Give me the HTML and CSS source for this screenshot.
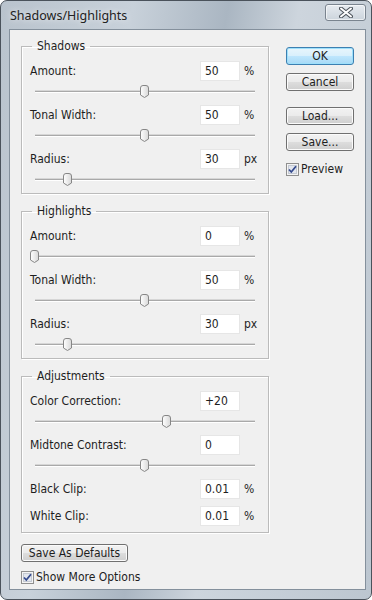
FILE: index.html
```html
<!DOCTYPE html>
<html lang="en">
<head>
    <meta charset="UTF-8">
    <title>Shadows/Highlights</title>
    <link rel="stylesheet" href="styles.css">
</head>
<body>
    <div class="window">
        <div class="titlebar">
            <span class="title">Shadows/Highlights</span>
            <span class="close">
                <svg width="14" height="11" viewBox="0 0 14 11">
                    <path d="M2 1.5 L12 9.5 M12 1.5 L2 9.5" stroke="#4d545c" stroke-width="4" stroke-linecap="round"/>
                    <path d="M2 1.5 L12 9.5 M12 1.5 L2 9.5" stroke="#fff" stroke-width="2" stroke-linecap="round"/>
                </svg>
            </span>
        </div>
        <div class="client">
            <div class="main">
                <div class="groups">
                    <!-- Shadows -->
                    <fieldset class="group">
                        <legend>Shadows</legend>
                        <div class="field">
                            <label>Amount:</label>
                            <input class="num" type="text" value="50">
                            <span class="unit">%</span>
                        </div>
                        <div class="slider"><div class="track"><span class="thumb" style="left:50%"></span></div></div>
                        <div class="field">
                            <label>Tonal Width:</label>
                            <input class="num" type="text" value="50">
                            <span class="unit">%</span>
                        </div>
                        <div class="slider"><div class="track"><span class="thumb" style="left:50%"></span></div></div>
                        <div class="field">
                            <label>Radius:</label>
                            <input class="num" type="text" value="30">
                            <span class="unit">px</span>
                        </div>
                        <div class="slider"><div class="track"><span class="thumb" style="left:15%"></span></div></div>
                    </fieldset>

                    <!-- Highlights -->
                    <fieldset class="group">
                        <legend>Highlights</legend>
                        <div class="field">
                            <label>Amount:</label>
                            <input class="num" type="text" value="0">
                            <span class="unit">%</span>
                        </div>
                        <div class="slider"><div class="track"><span class="thumb" style="left:0%"></span></div></div>
                        <div class="field">
                            <label>Tonal Width:</label>
                            <input class="num" type="text" value="50">
                            <span class="unit">%</span>
                        </div>
                        <div class="slider"><div class="track"><span class="thumb" style="left:50%"></span></div></div>
                        <div class="field">
                            <label>Radius:</label>
                            <input class="num" type="text" value="30">
                            <span class="unit">px</span>
                        </div>
                        <div class="slider"><div class="track"><span class="thumb" style="left:15%"></span></div></div>
                    </fieldset>

                    <!-- Adjustments -->
                    <fieldset class="group adjust">
                        <legend>Adjustments</legend>
                        <div class="field">
                            <label>Color Correction:</label>
                            <input class="num" type="text" value="+20">
                            <span class="unit"></span>
                        </div>
                        <div class="slider"><div class="track"><span class="thumb" style="left:60%"></span></div></div>
                        <div class="field">
                            <label>Midtone Contrast:</label>
                            <input class="num" type="text" value="0">
                            <span class="unit"></span>
                        </div>
                        <div class="slider"><div class="track"><span class="thumb" style="left:50%"></span></div></div>
                        <div class="field">
                            <label>Black Clip:</label>
                            <input class="num" type="text" value="0.01">
                            <span class="unit">%</span>
                        </div>
                        <div class="field clip">
                            <label>White Clip:</label>
                            <input class="num" type="text" value="0.01">
                            <span class="unit">%</span>
                        </div>
                    </fieldset>
                </div>

                <div class="side">
                    <button class="btn default">OK</button>
                    <button class="btn">Cancel</button>
                    <button class="btn load">Load...</button>
                    <button class="btn">Save...</button>
                    <div class="check">
                        <span class="box"></span>
                        <span>Preview</span>
                    </div>
                </div>
            </div>

            <div class="footer">
                <button class="btn defaults">Save As Defaults</button>
                <div class="check">
                    <span class="box"></span>
                    <span>Show More Options</span>
                </div>
            </div>
        </div>
    </div>
</body>
</html>
```

FILE: styles.css
```css
/* General Styling */
body {
    margin: 0;
    background: #ffffff;
    font-family: "DejaVu Sans Condensed", "DejaVu Sans", sans-serif;
    font-size: 12px;
    color: #1e1e1e;
}

.window {
    width: 372px;
    height: 600px;
    box-sizing: border-box;
    border: 1px solid #4a525b;
    border-radius: 7px;
    padding: 0 5px 9px 8px;
    display: flex;
    flex-direction: column;
    background: linear-gradient(100deg, #b9c3cd 0%, #c8d1da 28%, #aab6c2 48%, #cdd5dd 63%, #bcc6d0 100%);
}

/* Title bar */
.titlebar {
    height: 28px;
    display: flex;
    align-items: center;
    padding-left: 1px;
}

.title {
    font-family: "Noto Sans", sans-serif;
    font-size: 12.5px;
    color: #222;
    text-shadow: 0 0 6px rgba(255, 255, 255, 0.9);
}

.close {
    margin-left: auto;
    align-self: flex-start;
    margin-top: 3px;
    width: 41px;
    height: 17px;
    box-sizing: border-box;
    border: 1px solid #7a848f;
    border-radius: 3px;
    background: linear-gradient(#e6ebf0, #ccd4dc);
    box-shadow: inset 0 0 0 1px rgba(255, 255, 255, 0.6);
    display: flex;
    align-items: center;
    justify-content: center;
}

/* Client area */
.client {
    flex: 1;
    border: 1px solid #84909c;
    background: #f0f0f0;
    padding: 9px 0 0 11px;
}

.main {
    display: flex;
}

.groups {
    width: 248px;
}

/* Group boxes */
.group {
    margin: 10px 0 0 0;
    padding: 8px 6px 0 8px;
    border: 1px solid #bbbbbb;
    box-shadow: inset 1px 1px 0 #ffffff, 1px 1px 0 #ffffff;
    min-width: 0;
}

.group:first-child {
    margin-top: 0;
}

.group legend {
    margin-left: 2px;
    padding: 0 5px;
    line-height: 14px;
}

.adjust {
    padding-bottom: 6px;
}

.field {
    display: flex;
    align-items: center;
    height: 20px;
}

.field label {
    flex: 1;
}

.num {
    width: 40px;
    height: 20px;
    box-sizing: border-box;
    margin: 0;
    padding: 0 0 0 4px;
    border: 1px solid #e6e6e6;
    background: #ffffff;
    font-family: inherit;
    font-size: 12px;
    color: #1e1e1e;
    outline: none;
}

.unit {
    width: 18px;
    padding-left: 4px;
}

.clip {
    margin-top: 7px;
}

/* Sliders */
.slider {
    height: 24px;
    padding: 0 7px 0 5px;
}

.track {
    position: relative;
    top: 10px;
    height: 1px;
    background: #a9a9a9;
    box-shadow: 0 1px 0 #ffffff, 0 -1px 0 #d6d6d6;
}

.thumb {
    position: absolute;
    top: -6px;
    width: 9px;
    height: 13px;
    margin-left: -5px;
    background: url("data:image/svg+xml,%3Csvg xmlns='http://www.w3.org/2000/svg' width='9' height='13'%3E%3Cdefs%3E%3ClinearGradient id='g' x1='0' x2='1'%3E%3Cstop offset='0' stop-color='%23ffffff'/%3E%3Cstop offset='1' stop-color='%23d8d8d8'/%3E%3C/linearGradient%3E%3C/defs%3E%3Cpath d='M0.5 3 Q0.5 0.5 3 0.5 L6 0.5 Q8.5 0.5 8.5 3 L8.5 10 L4.5 12.5 L0.5 10 Z' fill='url(%23g)' stroke='%23868686'/%3E%3C/svg%3E") no-repeat;
}

/* Buttons */
.side {
    margin-left: 17px;
    padding-top: 8px;
    display: flex;
    flex-direction: column;
    align-items: flex-start;
}

.btn {
    width: 68px;
    height: 18px;
    margin: 0 0 8px 0;
    padding: 0;
    border: 1px solid #707070;
    border-radius: 3px;
    background: linear-gradient(#f2f2f2 0%, #ebebeb 48%, #dddddd 52%, #cfcfcf 100%);
    box-shadow: inset 0 0 0 1px #fbfbfb;
    font-family: inherit;
    font-size: 12px;
    color: #1e1e1e;
    line-height: 16px;
}

.btn.default {
    border-color: #3c7fb1;
    background: linear-gradient(#e8f5fc 0%, #d9f0fc 48%, #bee6fd 52%, #a7d9f5 100%);
    box-shadow: inset 0 0 0 1px #9ee0fb;
}

.btn.load {
    margin-top: 8px;
}

.check {
    display: flex;
    align-items: center;
    gap: 2px;
    margin-top: 3px;
}

.box {
    width: 13px;
    height: 13px;
    background: url("data:image/svg+xml,%3Csvg xmlns='http://www.w3.org/2000/svg' width='13' height='13'%3E%3Crect x='0.5' y='0.5' width='12' height='12' fill='%23f4f4f4' stroke='%238f8f8f'/%3E%3Crect x='2.5' y='2.5' width='8' height='8' fill='%23e2e6ee' stroke='%23c4c9d2'/%3E%3Cpath d='M3 6.5 L5.3 9 L10 3.3' fill='none' stroke='%23344a8e' stroke-width='1.8'/%3E%3C/svg%3E") no-repeat;
}

/* Footer */
.footer {
    padding-top: 11px;
}

.btn.defaults {
    width: 107px;
    margin-bottom: 8px;
}

.footer .check {
    margin-top: 0;
}
```
